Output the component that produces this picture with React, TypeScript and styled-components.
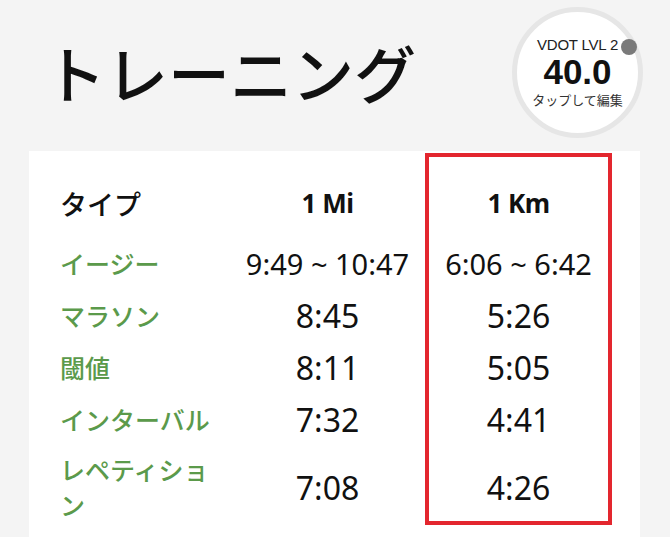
import React from 'react'
import styled, { createGlobalStyle } from 'styled-components'

const GlobalStyle = createGlobalStyle`
   html, body {
      margin: 0;
      padding: 0;
      background: #f4f4f4;
      font-family: "Noto Sans", "Noto Sans CJK JP", sans-serif;
      color: #111;
   }
`

type Pace = {
   label: string;
   mile: string;
   km: string;
   range?: boolean;
}

const paces: Pace[] = [
   { label: 'イージー', mile: '9:49 ~ 10:47', km: '6:06 ~ 6:42', range: true },
   { label: 'マラソン', mile: '8:45', km: '5:26' },
   { label: '閾値', mile: '8:11', km: '5:05' },
   { label: 'インターバル', mile: '7:32', km: '4:41' },
   { label: 'レペティション', mile: '7:08', km: '4:26' },
]

const Page = styled.div`
   padding: 0 30px 0 29px;
   min-height: 537px;
   box-sizing: border-box;
`

const Header = styled.header`
   display: flex;
   align-items: center;
   justify-content: space-between;
   padding: 7px 0 13px 15px;
   margin-right: -3px;
`

const Title = styled.h1`
   margin: 0 0 2px;
   font-family: "Noto Sans CJK JP", sans-serif;
   font-size: 62px;
   font-weight: 500;
   line-height: 1;
   color: #111;
`

const VdotBadge = styled.button`
   position: relative;
   width: 131px;
   height: 131px;
   border-radius: 50%;
   border: 5px solid #e6e6e6;
   background: #fff;
   box-sizing: border-box;
   display: flex;
   flex-direction: column;
   align-items: center;
   justify-content: center;
   padding: 0;
   cursor: pointer;
`

const VdotLevel = styled.span`
   font-size: 15px;
   line-height: 18px;
   color: #222;
   letter-spacing: -0.2px;
`

const VdotValue = styled.span`
   font-size: 35px;
   font-weight: 700;
   line-height: 36px;
   color: #111;
`

const VdotHint = styled.span`
   font-family: "Noto Sans CJK JP", sans-serif;
   font-size: 13px;
   line-height: 20px;
   color: #333;
`

const StatusDot = styled.span`
   position: absolute;
   top: 27px;
   right: 1px;
   width: 16px;
   height: 16px;
   border-radius: 50%;
   background: #7a7a7a;
`

const Card = styled.section`
   background: #fff;
   padding: 2px 28px 12px 31px;
`

const PaceGrid = styled.div`
   display: grid;
   grid-template-columns: 170px 195px 187px;
   grid-template-rows: 84px repeat(4, 52px) 84px;
`

const Highlight = styled.div`
   grid-column: 3;
   grid-row: 1 / -1;
   border: 4px solid #e3262e;
   margin-bottom: 4px;
   pointer-events: none;
`

const HeadCell = styled.div<{ $col: number; $unit?: boolean }>`
   grid-column: ${p => p.$col};
   grid-row: 1;
   display: flex;
   align-items: center;
   justify-content: ${p => (p.$unit ? 'center' : 'flex-start')};
   padding-top: 16px;
   font-family: ${p => (p.$unit ? '"Noto Sans", sans-serif' : '"Noto Sans CJK JP", sans-serif')};
   font-size: ${p => (p.$unit ? '26px' : '27px')};
   font-weight: ${p => (p.$unit ? 700 : 500)};
   letter-spacing: ${p => (p.$unit ? '-0.5px' : '0')};
   color: #111;
`

const LabelCell = styled.div<{ $row: number }>`
   grid-column: 1;
   grid-row: ${p => p.$row};
   display: flex;
   align-items: center;
   font-family: "Noto Sans CJK JP", sans-serif;
   font-size: 25px;
   font-weight: 500;
   line-height: 35px;
   color: #5b9a4b;
`

const ValueCell = styled.div<{ $row: number; $col: number; $range?: boolean }>`
   grid-column: ${p => p.$col};
   grid-row: ${p => p.$row};
   display: flex;
   align-items: center;
   justify-content: center;
   font-size: ${p => (p.$range ? '29px' : '32px')};
   color: #111;
   white-space: nowrap;
`

export default function App() {
   return (
      <>
         <GlobalStyle />
         <Page>
            <Header>
               <Title>トレーニング</Title>
               <VdotBadge type="button">
                  <VdotLevel>VDOT LVL 2</VdotLevel>
                  <VdotValue>40.0</VdotValue>
                  <VdotHint>タップして編集</VdotHint>
                  <StatusDot />
               </VdotBadge>
            </Header>
            <Card>
               <PaceGrid>
                  <Highlight />
                  <HeadCell $col={1}>タイプ</HeadCell>
                  <HeadCell $col={2} $unit>1 Mi</HeadCell>
                  <HeadCell $col={3} $unit>1 Km</HeadCell>
                  {paces.map((p, i) => (
                     <React.Fragment key={p.label}>
                        <LabelCell $row={i + 2}>{p.label}</LabelCell>
                        <ValueCell $row={i + 2} $col={2} $range={p.range}>{p.mile}</ValueCell>
                        <ValueCell $row={i + 2} $col={3} $range={p.range}>{p.km}</ValueCell>
                     </React.Fragment>
                  ))}
               </PaceGrid>
            </Card>
         </Page>
      </>
   )
}
